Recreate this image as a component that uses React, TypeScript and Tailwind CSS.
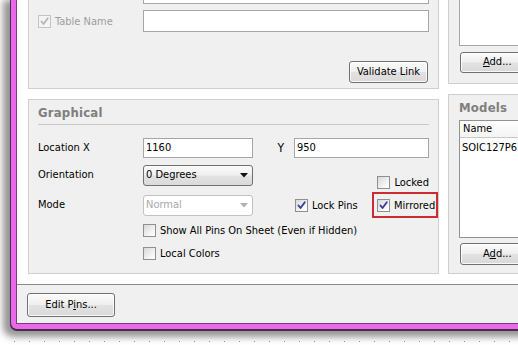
import React from "react";

const Check = ({ checked = false, disabled = false }: { checked?: boolean; disabled?: boolean }) => (
  <span
    className={
      "flex-none w-[13px] h-[13px] border flex items-center justify-center " +
      (disabled
        ? "border-[#c4c4c4] bg-[#f4f4f4]"
        : "border-[#8e8f8f] bg-[linear-gradient(135deg,#d8d8d8,#f6f6f6_70%,#ffffff)]")
    }
  >
    {checked && (
      <svg width="11" height="11" viewBox="0 0 11 11">
        <path
          d="M2.5 5.5 L4.5 8 L8.8 2.2"
          fill="none"
          stroke={disabled ? "#b8b8b8" : "#3d3f96"}
          strokeWidth="1.9"
          strokeLinecap="round"
          strokeLinejoin="round"
        />
      </svg>
    )}
  </span>
);

const CheckLabel = ({ label, checked, disabled }: { label: string; checked?: boolean; disabled?: boolean }) => (
  <div className="flex items-center gap-[4px]">
    <Check checked={checked} disabled={disabled} />
    <span className={"leading-[13px] whitespace-nowrap " + (disabled ? "text-[#9d9d9d]" : "")}>{label}</span>
  </div>
);

const Btn = ({ children, className = "" }: { children: React.ReactNode; className?: string }) => (
  <div
    className={
      "flex-none flex items-center justify-center border border-[#707070] rounded-[3px] bg-[linear-gradient(to_bottom,#fbfbfb,#efefef_48%,#e2e2e2_52%,#d9d9d9)] shadow-[inset_0_0_0_1px_rgba(255,255,255,0.8)] " +
      className
    }
  >
    {children}
  </div>
);

const Input = ({ value = "", className = "" }: { value?: string; className?: string }) => (
  <div className={"flex-none flex items-center border border-[#a3a6ab] bg-white pl-[2px] " + className}>
    {value}
  </div>
);

export default function App() {
  return (
    <div className="relative w-[518px] h-[345px] overflow-hidden bg-white text-[11px] text-black font-['DejaVu_Sans_Condensed','Liberation_Sans',sans-serif]">
      <div className="ml-[10px] w-[530px] h-[331px] rounded-bl-[7px] bg-[#4b2a4b] pl-px pb-[2px] shadow-[-4px_3px_7px_3px_rgba(0,0,0,0.42)]">
        <div className="h-full bg-[#e96ae9] pl-[5px] pb-[5px] rounded-bl-[6px]">
          <div className="h-full border-l border-b border-[#7d3b7d] bg-white flex flex-col overflow-hidden">
            {/* tab page */}
            <div className="flex-none h-[284px] flex gap-[9px] pl-[11px] overflow-hidden">
              {/* left column */}
              <div className="flex-none w-[411px] flex flex-col -mt-[30px]">
                <div className="flex-none h-[119px] border border-[#cfcfcf] bg-[#f0f0f0] px-[9px] pt-[11px] flex flex-col">
                  <div className="flex">
                    <div className="w-[105px]" />
                    <Input className="w-[286px] h-[22px]" />
                  </div>
                  <div className="flex items-center mt-[6px]">
                    <div className="w-[105px]">
                      <CheckLabel label="Table Name" checked disabled />
                    </div>
                    <Input className="w-[286px] h-[22px]" />
                  </div>
                  <div className="flex justify-end mt-[29px] pr-px">
                    <Btn className="w-[79px] h-[22px]">Validate Link</Btn>
                  </div>
                </div>
                <div className="flex-none mt-[10px] h-[175px] border border-[#cfcfcf] bg-[#f0f0f0] px-[9px] flex flex-col">
                  <div className="h-[25px] border-b border-[#c8c8c8] pt-[5px] leading-[16px] text-[13px] font-bold text-[#7f7f7f] tracking-[0.2px]">
                    Graphical
                  </div>
                  <div className="flex items-center mt-[13px] h-[20px]">
                    <div className="w-[105px]">Location X</div>
                    <Input value="1160" className="w-[110px] h-[20px]" />
                    <div className="w-[41px] text-right pr-[10px] text-[12px]">Y</div>
                    <Input value="950" className="w-[135px] h-[20px]" />
                  </div>
                  <div className="flex mt-[7px] h-[25px]">
                    <div className="w-[105px] self-start h-[21px] flex items-center">Orientation</div>
                    <div className="flex-none w-[110px] h-[21px] border border-[#707070] rounded-[3px] bg-[linear-gradient(to_bottom,#fbfbfb,#efefef_48%,#e2e2e2_52%,#dadada)] flex items-center pl-[2px] pr-[4px]">
                      <span className="flex-1">0 Degrees</span>
                      <svg width="8" height="5" viewBox="0 0 8 5">
                        <path d="M0 0 H8 L4 4.5 Z" fill="#111" />
                      </svg>
                    </div>
                    <div className="flex-1" />
                    <div className="self-end mb-px">
                      <CheckLabel label="Locked" />
                    </div>
                  </div>
                  <div className="flex items-center mt-[2px] h-[26px]">
                    <div className="w-[105px]">Mode</div>
                    <div className="flex-none w-[110px] h-[21px] border border-[#c2c2c2] rounded-[3px] bg-white flex items-center pl-[2px] pr-[4px] text-[#a8a8a8]">
                      <span className="flex-1">Normal</span>
                      <svg width="8" height="5" viewBox="0 0 8 5">
                        <path d="M0 0 H8 L4 4.5 Z" fill="#b0b0b0" />
                      </svg>
                    </div>
                    <div className="ml-[42px]">
                      <CheckLabel label="Lock Pins" checked />
                    </div>
                    <div className="flex-1" />
                    <div className="flex-none w-[66px] h-[26px] -mr-[9px] border-2 border-[#cc2b30] flex items-center pl-[3px]">
                      <CheckLabel label="Mirrored" checked />
                    </div>
                  </div>
                  <div className="flex mt-[6px]">
                    <div className="w-[105px]" />
                    <CheckLabel label="Show All Pins On Sheet (Even if Hidden)" />
                  </div>
                  <div className="flex mt-[10px]">
                    <div className="w-[105px]" />
                    <CheckLabel label="Local Colors" />
                  </div>
                </div>
              </div>
              {/* right column */}
              <div className="flex-none w-[120px] flex flex-col -mt-[30px]">
                <div className="flex-none h-[114px] border border-[#cfcfcf] bg-[#f0f0f0] pl-[10px] pt-[9px] flex flex-col">
                  <div className="h-[66px] border border-[#a3a6ab] bg-white" />
                  <Btn className="mt-[6px] ml-px w-[90px] h-[21px] justify-start pl-[22px]">
                    <span>
                      <span className="underline">A</span>dd...
                    </span>
                  </Btn>
                </div>
                <div className="flex-none mt-[10px] h-[180px] border border-[#cfcfcf] bg-[#f0f0f0] pl-[10px] flex flex-col">
                  <div className="h-[25px] pt-[5px] leading-[16px] text-[13px] font-bold text-[#7f7f7f] tracking-[0.2px]">
                    Models
                  </div>
                  <div className="h-[118px] border border-[#8f9297] bg-white flex flex-col overflow-hidden">
                    <div className="h-[17px] border-b border-[#c8c8c8] bg-[linear-gradient(to_bottom,#ffffff,#f4f4f4)] pl-[3px] flex items-center">
                      Name
                    </div>
                    <div className="pl-[2px] mt-[2px] leading-[15px] whitespace-nowrap">SOIC127P6</div>
                  </div>
                  <Btn className="mt-[5px] ml-px w-[90px] h-[22px] justify-start pl-[22px]">
                    <span>
                      A<span className="underline">d</span>d...
                    </span>
                  </Btn>
                </div>
              </div>
            </div>
            {/* footer */}
            <div className="flex-1 border-t border-[#8a8a8a] bg-[#f0f0f0] pl-[10px] pt-[8px]">
              <Btn className="w-[88px] h-[24px]">
                <span>
                  Edit P<span className="underline">i</span>ns...
                </span>
              </Btn>
            </div>
          </div>
        </div>
      </div>
      <div className="mt-[10px] ml-[14px] h-px bg-[repeating-linear-gradient(to_right,#8a8a8a_0px,#8a8a8a_1px,transparent_1px,transparent_15px)]" />
    </div>
  );
}
